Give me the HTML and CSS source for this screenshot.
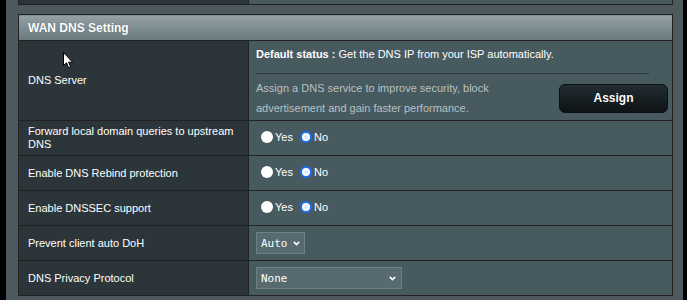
FILE: index.html
```html
<!DOCTYPE html>
<html>
<head>
<meta charset="utf-8">
<link rel="stylesheet" href="styles.css">
</head>
<body>
<div class="page">
  <table class="prev">
    <colgroup><col class="c1"><col></colgroup>
    <tr><th></th><td></td></tr>
  </table>
  <table class="form">
    <colgroup><col class="c1"><col></colgroup>
    <thead>
      <tr><td colspan="2" class="head">WAN DNS Setting</td></tr>
    </thead>
    <tbody>
      <tr class="dns">
        <th>DNS Server</th>
        <td>
          <div class="status"><b>Default status :</b> Get the DNS IP from your ISP automatically.</div>
          <div class="divider"></div>
          <div class="assign-row">
            <div class="desc">Assign a DNS service to improve security, block<br>advertisement and gain faster performance.</div>
            <button class="btn" type="button">Assign</button>
          </div>
        </td>
      </tr>
      <tr class="row">
        <th>Forward local domain queries to upstream DNS</th>
        <td><label class="opt"><span class="radio"></span>Yes</label><label class="opt"><span class="radio on"></span>No</label></td>
      </tr>
      <tr class="row">
        <th>Enable DNS Rebind protection</th>
        <td><label class="opt"><span class="radio"></span>Yes</label><label class="opt"><span class="radio on"></span>No</label></td>
      </tr>
      <tr class="row">
        <th>Enable DNSSEC support</th>
        <td><label class="opt"><span class="radio"></span>Yes</label><label class="opt"><span class="radio on"></span>No</label></td>
      </tr>
      <tr class="row">
        <th>Prevent client auto DoH</th>
        <td><span class="sel sel-auto">Auto<svg class="chev" width="7" height="5" viewBox="0 0 7 5"><path d="M0.8 0.9 L3.5 3.6 L6.2 0.9" fill="none" stroke="#fff" stroke-width="1.5"/></svg></span></td>
      </tr>
      <tr class="row">
        <th>DNS Privacy Protocol</th>
        <td><span class="sel sel-none">None<svg class="chev" width="7" height="5" viewBox="0 0 7 5"><path d="M0.8 0.9 L3.5 3.6 L6.2 0.9" fill="none" stroke="#fff" stroke-width="1.5"/></svg></span></td>
      </tr>
    </tbody>
  </table>
  <svg class="cursor" width="11" height="17" viewBox="0 0 11 17"><path d="M0.5 0.5 L0.5 13.5 L3.5 10.8 L5.6 15.8 L7.6 15 L5.6 10.2 L9.6 10.2 Z" fill="#fff" stroke="#000" stroke-width="1"/></svg>
</div>
</body>
</html>
```

FILE: styles.css
```css
html, body {
  margin: 0;
  padding: 0;
  background: #000;
}
body {
  font-family: "Liberation Sans", Arial, sans-serif;
  font-size: 11px;
  color: #fff;
}
.page {
  position: relative;
  margin-left: 6px;
  width: 677px;
  height: 300px;
  box-sizing: border-box;
  padding: 0 10px 0 12px;
  background: #4d595d;
  overflow: hidden;
}
table {
  border-collapse: collapse;
  table-layout: fixed;
  width: 655px;
}
col.c1 { width: 230px; }
.prev {
  margin-top: -20px;
  border: 1px solid #222;
}
.prev th, .prev td {
  height: 23px;
  padding: 0;
  border: 1px solid #222;
}
.prev th { background: #2c363a; }
.prev td { background: #475a5f; }
.form {
  margin-top: 9px;
  border: 1px solid #222;
}
.form th, .form td {
  border: 1px solid #222;
  padding: 0;
}
.form th {
  background: #2c363a;
  text-align: left;
  font-weight: normal;
  padding: 0 10px 0 9px;
  line-height: 13px;
}
.form td {
  background: #475a5f;
  padding: 0 4px 0 7px;
}
.form .head {
  height: 25px;
  padding: 0 0 0 9px;
  background: linear-gradient(#93a1a6, #6a797e);
  font-weight: bold;
  font-size: 12px;
  text-shadow: 0 0 1px rgba(0,0,0,0.4);
}
.dns th, .dns td {
  height: 79px;
}
.status {
  line-height: 20px;
  margin-top: 2px;
}
.divider {
  margin: 9px 19px 0 0;
  border-top: 1px solid #2e393d;
}
.assign-row {
  display: flex;
  align-items: center;
  justify-content: space-between;
  margin-top: 4px;
  margin-bottom: 2px;
}
.desc {
  color: #b9c0c2;
  line-height: 20px;
}
.btn {
  width: 109px;
  height: 29px;
  margin-top: 1px;
  border: 1px solid #0c1012;
  border-radius: 6px;
  background: linear-gradient(#222d32, #0e1315);
  color: #fff;
  font-family: "Liberation Sans", Arial, sans-serif;
  font-weight: bold;
  font-size: 12px;
  padding: 0;
  text-shadow: 0 0 1px #000;
}
.row th, .row td {
  height: 34px;
}
.opt {
  display: inline-flex;
  align-items: center;
  margin-right: 2px;
}
.radio {
  display: inline-block;
  width: 12px;
  height: 12px;
  border-radius: 50%;
  background: #fff;
  margin: 0 2px 0 5px;
  box-sizing: border-box;
}
.radio.on {
  border: 2px solid #1a6ff0;
  background: radial-gradient(circle, #dce8ff 0 1.5px, #fff 2px);
}
.sel {
  display: inline-flex;
  align-items: center;
  justify-content: space-between;
  box-sizing: border-box;
  height: 22px;
  padding: 0 4px 0 4px;
  background: #566a6f;
  border: 1px solid #6e8085;
  font-family: "DejaVu Sans Mono", monospace;
  font-size: 11px;
  color: #fff;
  vertical-align: middle;
}
.sel-auto { width: 49px; }
.sel-none { width: 146px; padding-right: 5px; }
.chev { display: block; margin-left: 3px; }
.cursor {
  position: absolute;
  left: 57px;
  top: 52px;
}
```
